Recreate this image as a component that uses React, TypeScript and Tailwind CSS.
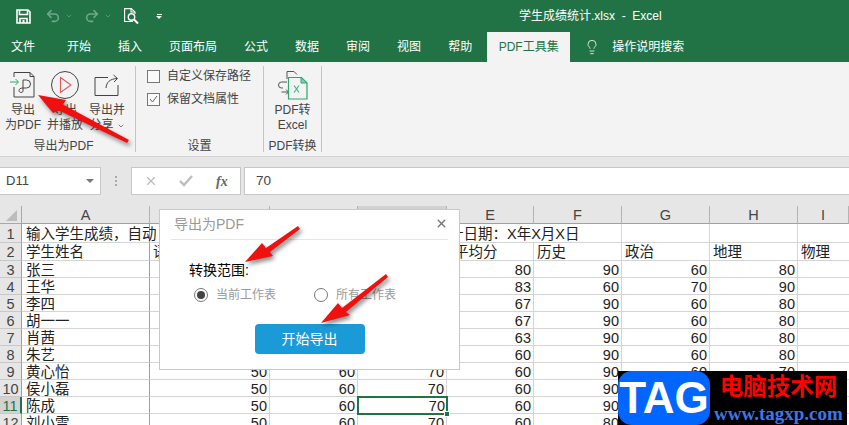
import { ChevronDown, Lightbulb, Redo2, Undo2, X } from "lucide-react";

const columns = ["A", "B", "C", "D", "E", "F", "G", "H", "I"];
const tabs = ["开始", "插入", "页面布局", "公式", "数据", "审阅", "视图", "帮助"];

const students = [
  ["张三", "50", "60", "70", "80", "90", "60", "80"],
  ["王华", "50", "60", "70", "83", "60", "70", "90"],
  ["李四", "50", "60", "70", "67", "90", "60", "80"],
  ["胡一一", "50", "60", "70", "67", "90", "60", "80"],
  ["肖茜", "50", "60", "70", "63", "90", "60", "80"],
  ["朱艺", "50", "60", "70", "60", "90", "60", "80"],
  ["黄心怡", "50", "60", "70", "60", "90", "60", "70"],
  ["侯小磊", "50", "60", "70", "60", "90", "60", "70"],
  ["陈成", "50", "60", "70", "60", "90", "60", "70"],
  ["刘小雪", "50", "60", "70", "60", "80", "60", "70"],
];

function SaveIcon() {
  return (
    <svg width="15" height="15" viewBox="0 0 15 15" fill="none" stroke="#fff" strokeWidth="1.6">
      <path d="M1 1h11l2 2v11H1z" />
      <path d="M3.5 1v4.5h8V1" />
      <path d="M4 14V9.5h7V14" />
      <path d="M6.5 11h2v3h-2z" fill="#fff" stroke="none" />
    </svg>
  );
}

function PreviewIcon() {
  return (
    <svg width="16" height="17" viewBox="0 0 16 17" fill="none" stroke="#fff" strokeWidth="1.1">
      <path d="M9 13.5H.6V.6h6.6L11 4v2" />
      <path d="M7 .6V4h4" />
      <circle cx="7.5" cy="9" r="3.2" strokeWidth="1.4" />
      <path d="M10 11.5l4 4" strokeWidth="2" />
    </svg>
  );
}

function ExportIcon() {
  return (
    <svg width="26" height="28" viewBox="0 0 26 28" fill="none" stroke="#444" strokeWidth="1">
      <path d="M4 6V1.5h16l4 4v20.5H4v-10" />
      <path d="M20 1.5v4h4" />
      <path d="M0 11h8M5.5 8l3 3-3 3" stroke="#2fa866" />
      <path d="M13 20V9h3.5a3.5 3.5 0 0 1 0 8H13c-2.5 0-4 1-4 2.5 0 2.5 4 2.5 4 .5" />
    </svg>
  );
}

function PlayIcon() {
  return (
    <svg width="30" height="30" viewBox="0 0 30 30" fill="none">
      <circle cx="15" cy="15" r="13.5" stroke="#444" />
      <path d="M10.5 7.5 21 15l-10.5 7.5z" stroke="#e2585b" strokeWidth="1.1" />
    </svg>
  );
}

function ShareIcon() {
  return (
    <svg width="26" height="24" viewBox="0 0 26 24" fill="none" stroke="#444">
      <path d="M14 4.5H1v18h23V12" />
      <path d="M12 15c.5-6 4-9 11-9.5M19.5 2l4 3.5-3.5 3.5" />
    </svg>
  );
}

function ExcelIcon() {
  return (
    <svg width="30" height="30" viewBox="0 0 30 30" fill="none">
      <path d="M9 9V1.5h7l3 3" stroke="#555" />
      <path d="M9 12H3.5a2 2 0 0 0 0 6H5M3.5 22h7M8 19.5l2.5 2.500-2.500 2.500" stroke="#555" />
      <path d="M10.500 7.500h13l5.500 5.500v16H10.500z" fill="#f3f3f3" stroke="#2fa570" strokeWidth="1.200" />
      <path d="M23 7.500V13h6z" fill="#8ed0ae" stroke="#2fa570" />
      <path d="M16 15.500l5 7M21 15.500l-5 7" stroke="#45b585" strokeWidth="1.200" />
    </svg>
  );
}

function RibbonButton({ icon, lines, caret }: { icon: React.ReactNode; lines: string[]; caret?: boolean }) {
  return (
    <div className="w-[42px] flex flex-col items-center">
      <div className="h-[37px] flex items-center justify-center">{icon}</div>
      {lines.map((line, i) => (
        <div key={line} className="h-[15px] leading-[15px] whitespace-nowrap flex items-center">
          {line}
          {caret && i === 1 && <ChevronDown size={8} className="ml-[3px]" />}
        </div>
      ))}
    </div>
  );
}

function CheckRow({ label, checked }: { label: string; checked?: boolean }) {
  return (
    <div className="h-[12px] flex items-center gap-[7px] whitespace-nowrap">
      <div className="w-[13px] h-[13px] border border-[#777] bg-[#fafafa] flex items-center justify-center">
        {checked && (
          <svg width="9" height="8" viewBox="0 0 9 8" fill="none" stroke="#666">
            <path d="M1 4l2.500 3L8 1" />
          </svg>
        )}
      </div>
      {label}
    </div>
  );
}

function RibbonGroup({
  width,
  label,
  labelClass,
  children,
}: {
  width: string;
  label: string;
  labelClass?: string;
  children: React.ReactNode;
}) {
  return (
    <div className={`${width} h-[86px] mt-[4px] border-r border-[#c4c4c4] flex flex-col`}>
      <div className="flex-1">{children}</div>
      <div className={`h-[14px] leading-[16px] text-center whitespace-nowrap ${labelClass ?? ""}`}>{label}</div>
    </div>
  );
}

function Radio({ label, on }: { label: string; on?: boolean }) {
  return (
    <div className="w-[120px] flex items-center gap-[8px] whitespace-nowrap text-[12px] text-[#999]">
      <div className="w-[14px] h-[14px] rounded-full border border-[#777] flex items-center justify-center">
        {on && <div className="w-[8px] h-[8px] rounded-full bg-[#444]" />}
      </div>
      {label}
    </div>
  );
}

export default function App() {
  return (
    <div className="relative w-[849px] h-[425px] overflow-hidden bg-white text-[#444] font-['Liberation_Sans','Noto_Sans_CJK_SC',sans-serif]">
      {/* title bar */}
      <div className="h-[32px] bg-[#217346] text-white flex items-center text-[12px]">
        <div className="w-[519px] flex items-center pl-[16px]">
          <SaveIcon />
          <Undo2 size={16} strokeWidth={2.4} className="ml-[14px] text-[#6fa88a]" />
          <ChevronDown size={8} strokeWidth={2} className="ml-[4px] text-[#6fa88a]" />
          <Redo2 size={16} strokeWidth={2.4} className="ml-[11px] text-[#6fa88a]" />
          <ChevronDown size={8} strokeWidth={2} className="ml-[4px] text-[#6fa88a]" />
          <div className="ml-[12px]">
            <PreviewIcon />
          </div>
          <div className="ml-[16px] flex flex-col items-center gap-[1px]">
            <div className="w-[5px] h-[1px] bg-white" />
            <div className="w-0 h-0 border-x-[3px] border-x-transparent border-t-[3px] border-t-white" />
          </div>
        </div>
        <div className="whitespace-pre">学生成绩统计.xlsx  -  Excel</div>
      </div>

      {/* tabs */}
      <div className="h-[30px] bg-[#217346] text-white text-[12px] flex items-center">
        <div className="pl-[11px] pr-[18.5px]">文件</div>
        {tabs.map((t) => (
          <div key={t} className="px-[13.5px] whitespace-nowrap">
            {t}
          </div>
        ))}
        <div className="ml-[1.5px] w-[83px] h-full bg-[#f3f3f3] text-[#217346] flex items-center justify-center whitespace-nowrap">
          PDF工具集
        </div>
        <Lightbulb size={16} strokeWidth={1.2} className="ml-[14px]" />
        <div className="ml-[12px] whitespace-nowrap">操作说明搜索</div>
      </div>

      {/* ribbon */}
      <div className="h-[95px] bg-[#f3f3f3] border-b border-[#d2d2d2] flex items-start text-[12px]">
        <RibbonGroup width="w-[136px]" label="导出为PDF" labelClass="pr-[8px]">
          <div className="flex pl-[2px]">
            <RibbonButton icon={<ExportIcon />} lines={["导出", "为PDF"]} />
            <RibbonButton icon={<PlayIcon />} lines={["导出", "并播放"]} />
            <RibbonButton icon={<ShareIcon />} lines={["导出并", "分享"]} caret />
          </div>
        </RibbonGroup>
        <RibbonGroup width="w-[128px]" label="设置">
          <div className="pt-[4px] pl-[11px] flex flex-col gap-[11px]">
            <CheckRow label="自定义保存路径" />
            <CheckRow label="保留文档属性" checked />
          </div>
        </RibbonGroup>
        <RibbonGroup width="w-[58px]" label="PDF转换">
          <div className="flex flex-col items-center">
            <div className="h-[37px] flex items-center justify-center">
              <ExcelIcon />
            </div>
            <div className="h-[15px] leading-[15px] whitespace-nowrap">PDF转</div>
            <div className="h-[15px] leading-[15px]">Excel</div>
          </div>
        </RibbonGroup>
      </div>

      {/* formula bar */}
      <div className="h-[49px] bg-[#e6e6e6] pt-[10px] flex items-start text-[13px]">
        <div className="w-[101px] h-[28px] bg-white border border-[#c6c6c6] border-l-0 flex items-center justify-between pl-[6px] pr-[6px]">
          D11
          <div className="w-0 h-0 border-x-[4px] border-x-transparent border-t-[4px] border-t-[#777]" />
        </div>
        <div className="w-[30px] h-[28px] flex flex-col items-center justify-center gap-[2px]">
          <div className="w-[2px] h-[2px] bg-[#aaa]" />
          <div className="w-[2px] h-[2px] bg-[#aaa]" />
          <div className="w-[2px] h-[2px] bg-[#aaa]" />
        </div>
        <div className="w-[110px] h-[28px] bg-white border border-[#c6c6c6] flex items-center">
          <X size={14} strokeWidth={2} className="ml-[12px] text-[#bdbdbd]" />
          <svg width="14" height="12" viewBox="0 0 14 12" fill="none" stroke="#bdbdbd" strokeWidth="2.400" className="ml-[21px]">
            <path d="M1 6l4 4 8-9" />
          </svg>
          <span className="ml-[23px] text-[14px] font-bold italic text-[#666] font-['Liberation_Serif',serif]">fx</span>
        </div>
        <div className="ml-[3px] flex-1 h-[28px] bg-white border border-r-0 border-[#c6c6c6] flex items-center pl-[11px] text-[13.5px]">
          70
        </div>
      </div>

      {/* sheet */}
      <div className="grid grid-cols-[22px_128px_120px_88px_89px_87px_88px_88px_88px_51px] grid-rows-[18px_19px_18px_repeat(10,17px)] text-[14.5px] leading-none text-[#222]">
        <div className="bg-[#e6e6e6] border-r border-b border-[#a8a8a8] flex items-end justify-end pr-[4px] pb-[2px]">
          <div className="w-0 h-0 border-l-[11px] border-l-transparent border-b-[11px] border-b-[#bcbcbc]" />
        </div>
        {columns.map((c) => (
          <div
            key={c}
            className={`${c === "D" ? "bg-[#d2d2d2]" : "bg-[#e6e6e6]"} border-r border-b border-r-[#b4b4b4] border-b-[#a0a0a0] flex items-center justify-center pt-[2px] text-[#444]`}
          >
            {c}
          </div>
        ))}

        {/* row 1 */}
        <div className="bg-[#e6e6e6] border-r border-b border-r-[#a0a0a0] border-b-[#c8c8c8] flex items-center justify-center pt-[2px] text-[#444]">1</div>
        <div className="border-r border-b border-r-[#a0a0a0] border-b-[#d4d4d4] flex items-center pl-[4px] pt-[2px] whitespace-nowrap">输入学生成绩，自动</div>
        <div className="border-b border-[#d4d4d4]" />
        <div className="border-b border-[#d4d4d4]" />
        <div className="border-b border-[#d4d4d4]" />
        <div className="border-b border-[#d4d4d4] flex items-center pl-[2px] pt-[2px] whitespace-nowrap">计日期：X年X月X日</div>
        <div className="border-r border-b border-[#d4d4d4]" />
        <div className="border-r border-b border-[#d4d4d4]" />
        <div className="border-r border-b border-[#d4d4d4]" />
        <div className="border-b border-[#d4d4d4]" />

        {/* row 2 */}
        <div className="bg-[#e6e6e6] border-r border-b border-r-[#a0a0a0] border-b-[#c8c8c8] flex items-center justify-center pt-[2px] text-[#444]">2</div>
        <div className="border-r border-b border-r-[#a0a0a0] border-b-[#d4d4d4] flex items-center pl-[4px] pt-[2px]">学生姓名</div>
        <div className="border-r border-b border-[#d4d4d4] flex items-center pl-[3px] pt-[2px]">语文</div>
        <div className="border-r border-b border-[#d4d4d4]" />
        <div className="border-r border-b border-[#d4d4d4]" />
        <div className="border-r border-b border-[#d4d4d4] flex items-center pl-[7px] pt-[2px]">平均分</div>
        <div className="border-r border-b border-[#d4d4d4] flex items-center pl-[3px] pt-[2px]">历史</div>
        <div className="border-r border-b border-[#d4d4d4] flex items-center pl-[3px] pt-[2px]">政治</div>
        <div className="border-r border-b border-[#d4d4d4] flex items-center pl-[3px] pt-[2px]">地理</div>
        <div className="border-b border-[#d4d4d4] flex items-center pl-[3px] pt-[2px]">物理</div>

        {students.map((row, i) => {
          const num = i + 3;
          return [
            <div
              key={`h${num}`}
              className={
                num === 11
                  ? "bg-[#d2d2d2] border-r-2 border-b border-r-[#217346] border-b-[#c8c8c8] flex items-center justify-center pt-[2px] text-[#217346]"
                  : "bg-[#e6e6e6] border-r border-b border-r-[#a0a0a0] border-b-[#c8c8c8] flex items-center justify-center pt-[2px] text-[#444]"
              }
            >
              {num}
            </div>,
            <div key={`a${num}`} className="border-r border-b border-r-[#a0a0a0] border-b-[#d4d4d4] flex items-center pl-[4px] pt-[2px]">
              {row[0]}
            </div>,
            ...row.slice(1).map((v, j) => (
              <div
                key={`${num}-${j}`}
                className={
                  num === 11 && j === 2
                    ? "relative z-10 outline-2 -outline-offset-1 outline-[#217346] flex items-center justify-end pr-[2px] pt-[2px]"
                    : "border-r border-b border-[#d4d4d4] flex items-center justify-end pr-[2px] pt-[2px]"
                }
              >
                {v}
                {num === 11 && j === 2 && (
                  <div className="absolute -right-[3px] -bottom-[3px] w-[6px] h-[6px] bg-[#217346] border border-white" />
                )}
              </div>
            )),
            <div key={`i${num}`} className="border-b border-[#d4d4d4]" />,
          ];
        })}
      </div>

      {/* dialog */}
      <div className="absolute z-20 left-[159px] top-[209px] w-[301px] h-[161px] bg-white border border-[#c8c8c8] px-[11px]">
        <div className="h-[30px] border-b border-[#e6e6e6] flex items-center justify-between pl-[3px] text-[14px] text-[#999]">
          导出为PDF
          <X size={13} strokeWidth={2.600} className="text-[#777] mb-[3px]" />
        </div>
        <div className="pl-[18px] pt-[21px] text-[14px] leading-[18px] text-black">转换范围:</div>
        <div className="pl-[23px] pt-[7px] flex">
          <Radio label="当前工作表" on />
          <Radio label="所有工作表" />
        </div>
        <div className="flex justify-center pt-[20px]">
          <div className="w-[110px] h-[30px] rounded-[4px] bg-[#1a9ad6] text-white text-[14px] flex items-center justify-center">开始导出</div>
        </div>
      </div>

      {/* red arrows drawn on top of the screenshot */}
      <svg
        width="849"
        height="425"
        viewBox="0 0 849 425"
        className="absolute z-30 inset-0 pointer-events-none drop-shadow-[2px_3px_2px_rgba(0,0,0,0.45)]"
      >
        <path d="M38 95 66 100 63 104.500 129 140 127 143 59 110.500 53 113z" fill="#f01010" />
        <path d="M245 262 262 243 266 248 298 226 300 229 270 252 273 256z" fill="#f01010" />
        <path d="M321 323 338 303 342 308 386 274 388 277 346 312 350 315z" fill="#f01010" />
      </svg>

      {/* watermark */}
      <div className="absolute z-30 left-[618px] top-[371px] w-[229px] h-[54px] bg-black flex">
        <div className="w-[92px] h-[54px] rounded-[14px] bg-[#0066ff] text-white text-[44px] font-bold leading-[54px] text-center whitespace-nowrap">
          TAG
        </div>
        <div className="flex-1 flex flex-col items-center">
          <div className="h-[32px] leading-[32px] text-[23.500px] font-bold text-[#ff0000] whitespace-nowrap">电脑技术网</div>
          <div className="text-[19px] leading-[22px] font-bold text-[#3a78e8] font-['Liberation_Serif',serif] whitespace-nowrap">www.tagxp.com</div>
        </div>
      </div>
    </div>
  );
}
